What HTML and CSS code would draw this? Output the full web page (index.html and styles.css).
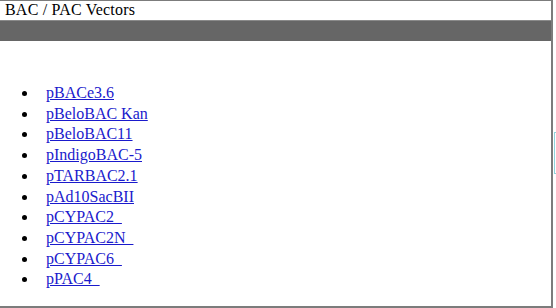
FILE: index.html
```html
<!DOCTYPE html>
<html lang="en">
<head>
  <meta charset="UTF-8">
  <title>BAC / PAC Vectors</title>
  <link rel="stylesheet" href="styles.css">
</head>
<body>
  <div class="frame">
    <div class="title">BAC / PAC Vectors</div>
    <div class="bar"></div>
    <ul class="vectors">
      <li><a href="#">pBACe3.6</a></li>
      <li><a href="#">pBeloBAC Kan</a></li>
      <li><a href="#">pBeloBAC11</a></li>
      <li><a href="#">pIndigoBAC-5</a></li>
      <li><a href="#">pTARBAC2.1</a></li>
      <li><a href="#">pAd10SacBII</a></li>
      <li><a href="#">pCYPAC2&nbsp;&nbsp;</a></li>
      <li><a href="#">pCYPAC2N&nbsp;&nbsp;</a></li>
      <li><a href="#">pCYPAC6&nbsp;&nbsp;</a></li>
      <li><a href="#">pPAC4&nbsp;&nbsp;</a></li>
    </ul>
    <div class="edge"></div>
  </div>
</body>
</html>
```

FILE: styles.css
```css
body {
  margin: 0;
  font-family: 'Liberation Serif', 'Times New Roman', serif;
  font-size: 16px;
  color: #000;
  background: #fff;
  overflow: hidden;
}
.frame {
  position: relative;
  width: 551px;
  height: 305px;
  border-top: 1px solid #7c7c7c;
  border-right: 2px solid #7c7c7c;
  border-bottom: 2px solid #7c7c7c;
}
.title {
  height: 19px;
  line-height: 18px;
  padding-left: 5px;
  letter-spacing: 0.2px;
}
.bar {
  height: 20px;
  background: #666;
  border-top: 1px solid #8a8a8a;
}
.vectors {
  margin: 42px 0 0;
  padding-left: 46px;
  list-style: none;
}
.vectors li {
  line-height: 20.7px;
}
.vectors li::before {
  content: '';
  display: inline-block;
  width: 5px;
  height: 5px;
  border-radius: 50%;
  background: #000;
  margin-left: -24px;
  margin-right: 19px;
  vertical-align: 2px;
}
.vectors a {
  color: #1a1acc;
}
.edge {
  position: absolute;
  left: 554px;
  top: 131px;
  width: 4px;
  height: 40px;
  border: 1px solid #8fd4dc;
}
```
